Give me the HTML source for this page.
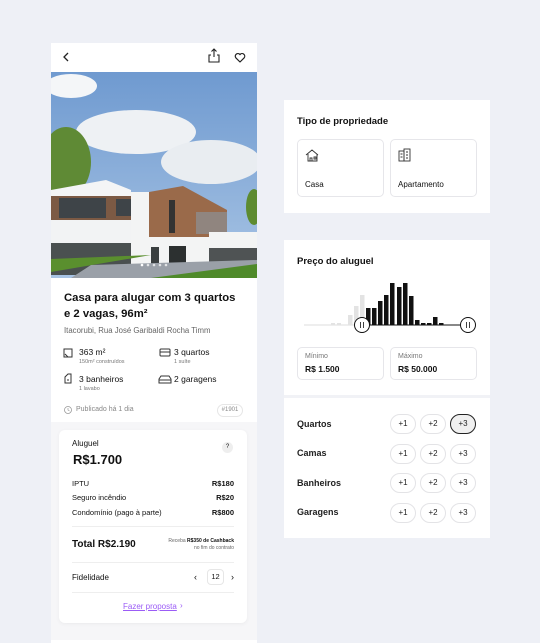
<!DOCTYPE html>
<html><head><meta charset="utf-8"><style>
*{box-sizing:border-box;margin:0;padding:0}
body{width:540px;height:640px;overflow:hidden;background:#eef0f6;font-family:"Liberation Sans",sans-serif;color:#111;position:relative}
.abs{position:absolute}
.lp{left:51px;top:43px;width:206px;height:600px;background:#fff}
.t{position:absolute;white-space:nowrap}
.card{position:absolute;background:#fff;border:1px solid #e6e6ea;border-radius:5px}
.chip{position:absolute;width:26px;height:20px;border:1px solid #e3e3e6;border-radius:11px;font-size:8px;text-align:center;line-height:18px;color:#222;background:#fff}
</style></head><body>
<div class="abs lp"></div>
<!-- header -->
<svg class="abs" style="left:51px;top:43px" width="206" height="29">
<path d="M17 10l-4 4 4 4" fill="none" stroke="#222" stroke-width="1.3"/>
<path d="M163 14v-8m-2.5 2.5l2.5-2.5 2.5 2.5M160 12h-2v7h10v-7h-2" fill="none" stroke="#222" stroke-width="1.1"/>
<path d="M189 19l-4.2-4.2a2.6 2.6 0 0 1 4.2-3.2 2.6 2.6 0 0 1 4.2 3.2z" fill="none" stroke="#222" stroke-width="1.2" stroke-linejoin="round"/>
</svg>
<!-- image -->
<svg class="abs" style="left:51px;top:72px" width="206" height="206">
<defs><linearGradient id="sky" x1="0" y1="0" x2="0" y2="1"><stop offset="0" stop-color="#6f9ad0"/><stop offset="1" stop-color="#a8c4e4"/></linearGradient></defs>
<rect width="206" height="206" fill="url(#sky)"/>
<ellipse cx="20" cy="14" rx="26" ry="12" fill="#f4f6f8"/>
<ellipse cx="85" cy="60" rx="60" ry="22" fill="#eef1f4"/>
<ellipse cx="160" cy="90" rx="50" ry="22" fill="#e9edf1"/>
<ellipse cx="15" cy="90" rx="25" ry="35" fill="#5f8a35"/>
<ellipse cx="203" cy="135" rx="8" ry="18" fill="#5d8b30"/>
<polygon points="0,118 55,108 80,118 80,180 0,180" fill="#f4f5f6"/>
<rect x="0" y="124" width="82" height="24" fill="#7c5a44"/>
<rect x="8" y="126" width="47" height="20" fill="#3e4448"/>
<rect x="65" y="127" width="16" height="17" fill="#3e4448"/>
<rect x="0" y="148" width="82" height="23" fill="#f2f3f4"/>
<rect x="0" y="171" width="80" height="32" fill="#4a5050"/>
<rect x="80" y="120" width="18" height="85" fill="#f3f4f4"/>
<polygon points="98,120 132,114 176,138 176,165 98,165" fill="#9a6a4a"/>
<rect x="118" y="128" width="6" height="33" fill="#333"/>
<rect x="98" y="165" width="60" height="40" fill="#f3f4f4"/>
<rect x="145" y="140" width="31" height="22" fill="#8a97a4" opacity=".6"/>
<rect x="158" y="160" width="48" height="45" fill="#f3f4f4"/>
<rect x="158" y="176" width="48" height="29" fill="#4f5354"/>
<rect x="100" y="175" width="8" height="30" fill="#3a3f40"/>
<rect x="118" y="174" width="17" height="31" fill="#2c3030"/>
<polygon points="0,187 100,183 0,200" fill="#5a8f2e"/>
<polygon points="40,193 206,188 206,206 20,206" fill="#9aa0a8"/>
<polygon points="100,206 206,192 206,206" fill="#4f8a2a"/>
<circle cx="91" cy="193" r="1.3" fill="#fff"/><circle cx="97" cy="193" r="1.3" fill="#fff" opacity=".7"/><circle cx="103" cy="193" r="1.3" fill="#fff" opacity=".7"/><circle cx="109" cy="193" r="1.3" fill="#fff" opacity=".7"/><circle cx="115" cy="193" r="1.3" fill="#fff" opacity=".7"/>
</svg>
<div class="t" style="left:64px;top:290px;font-size:11.3px;font-weight:bold;line-height:16px">Casa para alugar com 3 quartos<br>e 2 vagas, 96m²</div>
<div class="t" style="left:64px;top:326px;font-size:7.8px;color:#666">Itacorubi, Rua José Garibaldi Rocha Timm</div>
<svg class="abs" style="left:63px;top:347px" width="120" height="40" fill="none" stroke="#333" stroke-width="1">
<rect x="1" y="2" width="8" height="8"/><path d="M2 7l3 3"/>
<path d="M2 36v-6l3-3h3v9zM4 33h2"/>
<rect x="97" y="2" width="10" height="7" rx="1"/><path d="M97 5h10"/>
<path d="M96 36v-4l2-3h8l2 3v4zM96 33h12"/>
</svg>
<div class="t" style="left:79px;top:347px;font-size:8.5px">363 m²</div>
<div class="t" style="left:79px;top:359px;font-size:5.5px;color:#777">150m² construídos</div>
<div class="t" style="left:174px;top:347px;font-size:8.5px">3 quartos</div>
<div class="t" style="left:174px;top:359px;font-size:5.5px;color:#777">1 suíte</div>
<div class="t" style="left:79px;top:374px;font-size:8.5px">3 banheiros</div>
<div class="t" style="left:79px;top:386px;font-size:5.5px;color:#777">1 lavabo</div>
<div class="t" style="left:174px;top:374px;font-size:8.5px">2 garagens</div>
<svg class="abs" style="left:63px;top:405px" width="10" height="10"><circle cx="5" cy="5" r="3.5" fill="none" stroke="#999" stroke-width=".8"/><path d="M5 3v2l1.5 1" stroke="#999" stroke-width=".7" fill="none"/></svg>
<div class="t" style="left:76px;top:406px;font-size:7px;color:#888">Publicado há 1 dia</div>
<div class="t" style="left:217px;top:404px;width:26px;height:13px;border:1px solid #e6e6e6;border-radius:7px;font-size:6px;color:#888;text-align:center;line-height:11px">#1901</div>
<div class="abs" style="left:51px;top:422px;width:206px;height:218px;background:#f6f6f8"></div>
<div class="abs" style="left:59px;top:430px;width:188px;height:193px;background:#fff;border-radius:6px;box-shadow:0 1px 4px rgba(0,0,0,.05)"></div>
<div class="t" style="left:72px;top:439px;font-size:8px">Aluguel</div>
<div class="t" style="left:222px;top:442px;width:11px;height:11px;border-radius:50%;background:#eee;font-size:6px;text-align:center;line-height:11px">?</div>
<div class="t" style="left:73px;top:452px;font-size:13px;font-weight:bold">R$1.700</div>
<div class="t" style="left:72px;top:479px;font-size:7.5px">IPTU</div><div class="t" style="right:306px;top:479px;font-size:7.5px;font-weight:bold">R$180</div>
<div class="t" style="left:72px;top:493px;font-size:7.5px">Seguro incêndio</div><div class="t" style="right:306px;top:493px;font-size:7.5px;font-weight:bold">R$20</div>
<div class="t" style="left:72px;top:508px;font-size:7.5px">Condomínio (pago à parte)</div><div class="t" style="right:306px;top:508px;font-size:7.5px;font-weight:bold">R$800</div>
<div class="abs" style="left:72px;top:526px;width:162px;height:1px;background:#eee"></div>
<div class="t" style="left:72px;top:539px;font-size:10px;font-weight:bold">Total R$2.190</div>
<div class="t" style="right:306px;top:538px;font-size:5px;color:#666;text-align:right;line-height:7px">Receba <b style="color:#111">R$350 de Cashback</b><br>no fim do contrato</div>
<div class="abs" style="left:72px;top:562px;width:162px;height:1px;background:#eee"></div>
<div class="t" style="left:72px;top:573px;font-size:8px">Fidelidade</div>
<div class="t" style="left:194px;top:572px;font-size:9px">‹</div>
<div class="t" style="left:207px;top:569px;width:17px;height:16px;border:1px solid #e6e6e6;border-radius:4px;font-size:7.5px;text-align:center;line-height:14px">12</div>
<div class="t" style="left:231px;top:572px;font-size:9px">›</div>
<div class="abs" style="left:72px;top:592px;width:162px;height:1px;background:#eee"></div>
<div class="t" style="left:123px;top:602px;font-size:8px;color:#9b5cf6;text-decoration:underline">Fazer proposta</div>
<div class="t" style="left:180px;top:601px;font-size:8px;color:#9b5cf6">›</div>

<!-- right panel 1 -->
<div class="abs" style="left:284px;top:100px;width:206px;height:113px;background:#fff"></div>
<div class="t" style="left:297px;top:116px;font-size:9.5px;font-weight:bold">Tipo de propriedade</div>
<div class="card" style="left:297px;top:139px;width:87px;height:58px"></div>
<div class="card" style="left:390px;top:139px;width:87px;height:58px"></div>
<svg class="abs" style="left:305px;top:148px" width="14" height="14" fill="none" stroke="#333" stroke-width=".9"><path d="M1 7l6-5 6 5M3 6v7h9V6M5 13v-3h2v3M9 9h2v2H9z"/></svg>
<svg class="abs" style="left:398px;top:148px" width="14" height="14" fill="none" stroke="#333" stroke-width=".9"><rect x="1" y="3" width="5" height="10"/><rect x="6" y="1" width="6" height="12"/><path d="M8 4h2M8 7h2M8 10h2M2.5 6h2M2.5 9h2"/></svg>
<div class="t" style="left:305px;top:180px;font-size:8px">Casa</div>
<div class="t" style="left:398px;top:180px;font-size:8px">Apartamento</div>

<!-- right panel 2 -->
<div class="abs" style="left:284px;top:240px;width:206px;height:298px;background:#fff"></div>
<div class="t" style="left:297px;top:256px;font-size:9.5px;font-weight:bold">Preço do aluguel</div>
<svg class="abs" style="left:284px;top:270px" width="206" height="70">
<line x1="20" y1="55" x2="78" y2="55" stroke="#ddd" stroke-width="1"/>
<line x1="78" y1="55" x2="184" y2="55" stroke="#111" stroke-width="1"/>
<g fill="#e3e3e3"><rect x="47" y="53" width="4" height="2"/><rect x="53" y="53" width="4" height="2"/><rect x="64" y="45" width="4.5" height="10"/><rect x="70" y="36" width="4.5" height="19"/><rect x="76" y="25" width="4.5" height="30"/></g>
<g fill="#111"><rect x="82" y="38" width="4.5" height="17"/><rect x="88" y="38" width="4.5" height="17"/><rect x="94" y="31" width="4.5" height="24"/><rect x="100" y="25" width="4.5" height="30"/><rect x="106" y="13" width="4.5" height="42"/><rect x="113" y="17" width="4.5" height="38"/><rect x="119" y="13" width="4.5" height="42"/><rect x="125" y="26" width="4.5" height="29"/><rect x="131" y="50" width="4.5" height="5"/><rect x="137" y="53" width="4.5" height="2"/><rect x="143" y="53" width="4.5" height="2"/><rect x="149" y="47" width="4.5" height="8"/><rect x="155" y="53" width="4.5" height="2"/></g>
<circle cx="78" cy="55" r="7.5" fill="#fff" stroke="#111"/><path d="M76.5 52v6M79.5 52v6" stroke="#111" stroke-width=".8"/>
<circle cx="184" cy="55" r="7.5" fill="#fff" stroke="#111"/><path d="M182.5 52v6M185.5 52v6" stroke="#111" stroke-width=".8"/>
</svg>
<div class="card" style="left:297px;top:347px;width:87px;height:33px"></div>
<div class="card" style="left:390px;top:347px;width:87px;height:33px"></div>
<div class="t" style="left:305px;top:353px;font-size:7px;color:#777">Mínimo</div>
<div class="t" style="left:305px;top:364px;font-size:8.5px;font-weight:bold">R$ 1.500</div>
<div class="t" style="left:398px;top:353px;font-size:7px;color:#777">Máximo</div>
<div class="t" style="left:398px;top:364px;font-size:8.5px;font-weight:bold">R$ 50.000</div>
<div class="abs" style="left:284px;top:395px;width:206px;height:3px;background:#f1f2f6"></div>
<div class="t" style="left:297px;top:419px;font-size:9px;font-weight:bold;color:#222">Quartos</div>
<div class="t" style="left:297px;top:448px;font-size:9px;font-weight:bold;color:#222">Camas</div>
<div class="t" style="left:297px;top:478px;font-size:9px;font-weight:bold;color:#222">Banheiros</div>
<div class="t" style="left:297px;top:507px;font-size:9px;font-weight:bold;color:#222">Garagens</div>
<div class="chip" style="left:390px;top:414px">+1</div><div class="chip" style="left:420px;top:414px">+2</div><div class="chip" style="left:450px;top:414px;background:#f0f0f0;border-color:#222">+3</div>
<div class="chip" style="left:390px;top:444px">+1</div><div class="chip" style="left:420px;top:444px">+2</div><div class="chip" style="left:450px;top:444px">+3</div>
<div class="chip" style="left:390px;top:473px">+1</div><div class="chip" style="left:420px;top:473px">+2</div><div class="chip" style="left:450px;top:473px">+3</div>
<div class="chip" style="left:390px;top:503px">+1</div><div class="chip" style="left:420px;top:503px">+2</div><div class="chip" style="left:450px;top:503px">+3</div>
</body></html>
